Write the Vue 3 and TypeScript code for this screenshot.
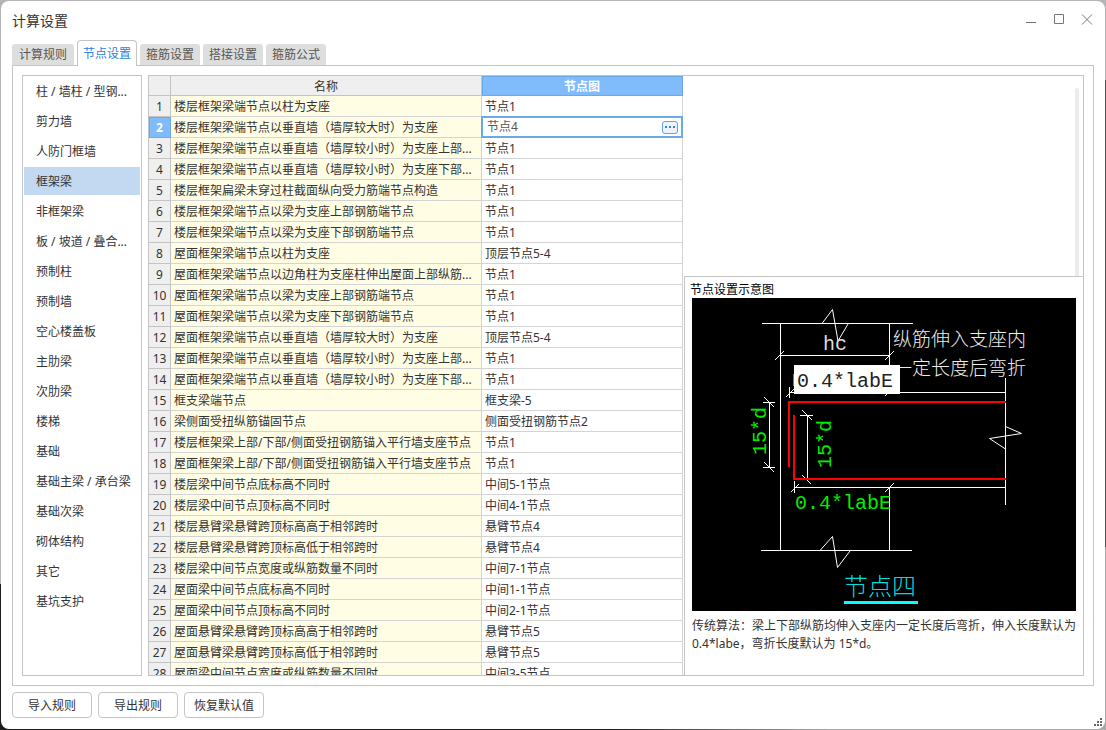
<script setup lang="ts">
import { ref } from 'vue'

interface Rule {
  name: string
  node: string
}

const tabs: string[] = ['计算规则', '节点设置', '箍筋设置', '搭接设置', '箍筋公式']
const activeTab = ref(1)

const categories: string[] = [
  '柱 / 墙柱 / 型钢...', '剪力墙', '人防门框墙', '框架梁', '非框架梁', '板 / 坡道 / 叠合...',
  '预制柱', '预制墙', '空心楼盖板', '主肋梁', '次肋梁', '楼梯', '基础', '基础主梁 / 承台梁',
  '基础次梁', '砌体结构', '其它', '基坑支护',
]
const activeCategory = ref(3)

const rules = ref<Rule[]>([
  { name: '楼层框架梁端节点以柱为支座', node: '节点1' },
  { name: '楼层框架梁端节点以垂直墙（墙厚较大时）为支座', node: '节点4' },
  { name: '楼层框架梁端节点以垂直墙（墙厚较小时）为支座上部...', node: '节点1' },
  { name: '楼层框架梁端节点以垂直墙（墙厚较小时）为支座下部...', node: '节点1' },
  { name: '楼层框架扁梁未穿过柱截面纵向受力筋端节点构造', node: '节点1' },
  { name: '楼层框架梁端节点以梁为支座上部钢筋端节点', node: '节点1' },
  { name: '楼层框架梁端节点以梁为支座下部钢筋端节点', node: '节点1' },
  { name: '屋面框架梁端节点以柱为支座', node: '顶层节点5-4' },
  { name: '屋面框架梁端节点以边角柱为支座柱伸出屋面上部纵筋...', node: '节点1' },
  { name: '屋面框架梁端节点以梁为支座上部钢筋端节点', node: '节点1' },
  { name: '屋面框架梁端节点以梁为支座下部钢筋端节点', node: '节点1' },
  { name: '屋面框架梁端节点以垂直墙（墙厚较大时）为支座', node: '顶层节点5-4' },
  { name: '屋面框架梁端节点以垂直墙（墙厚较小时）为支座上部...', node: '节点1' },
  { name: '屋面框架梁端节点以垂直墙（墙厚较小时）为支座下部...', node: '节点1' },
  { name: '框支梁端节点', node: '框支梁-5' },
  { name: '梁侧面受扭纵筋锚固节点', node: '侧面受扭钢筋节点2' },
  { name: '楼层框架梁上部/下部/侧面受扭钢筋锚入平行墙支座节点', node: '节点1' },
  { name: '屋面框架梁上部/下部/侧面受扭钢筋锚入平行墙支座节点', node: '节点1' },
  { name: '楼层梁中间节点底标高不同时', node: '中间5-1节点' },
  { name: '楼层梁中间节点顶标高不同时', node: '中间4-1节点' },
  { name: '楼层悬臂梁悬臂跨顶标高高于相邻跨时', node: '悬臂节点4' },
  { name: '楼层悬臂梁悬臂跨顶标高低于相邻跨时', node: '悬臂节点4' },
  { name: '楼层梁中间节点宽度或纵筋数量不同时', node: '中间7-1节点' },
  { name: '屋面梁中间节点底标高不同时', node: '中间1-1节点' },
  { name: '屋面梁中间节点顶标高不同时', node: '中间2-1节点' },
  { name: '屋面悬臂梁悬臂跨顶标高高于相邻跨时', node: '悬臂节点5' },
  { name: '屋面悬臂梁悬臂跨顶标高低于相邻跨时', node: '悬臂节点5' },
  { name: '屋面梁中间节点宽度或纵筋数量不同时', node: '中间3-5节点' },
])
const editing = ref(1)
</script>

<template>
  <div class="backdrop">
    <main class="dialog">
      <header class="titlebar">
        <h1>计算设置</h1>
        <div class="window-buttons">
          <button type="button" aria-label="最小化">
            <svg viewBox="0 0 12 12"><path d="M1 9.5h10" /></svg>
          </button>
          <button type="button" aria-label="最大化">
            <svg viewBox="0 0 12 12"><path d="M1.5 1.5h9v9h-9z" /></svg>
          </button>
          <button type="button" aria-label="关闭">
            <svg viewBox="0 0 12 12"><path d="M1 1.500l10 10M11 1.500L1 11.500" /></svg>
          </button>
        </div>
      </header>

      <div class="tabs" role="tablist">
        <button
          v-for="(tab, i) in tabs"
          :key="tab"
          type="button"
          role="tab"
          :aria-selected="i === activeTab"
          :class="['tab', { active: i === activeTab }]"
          @click="activeTab = i"
        >{{ tab }}</button>
      </div>

      <section class="page">
        <nav class="categories">
          <button
            v-for="(item, i) in categories"
            :key="item"
            type="button"
            :class="['category', { active: i === activeCategory }]"
            @click="activeCategory = i"
          >{{ item }}</button>
        </nav>

        <div class="content">
          <div class="grid">
            <table>
              <colgroup>
                <col class="col-index" />
                <col class="col-name" />
                <col class="col-node" />
              </colgroup>
              <thead>
                <tr>
                  <th></th>
                  <th scope="col">名称</th>
                  <th scope="col" class="selected">节点图</th>
                </tr>
              </thead>
              <tbody>
                <tr v-for="(rule, i) in rules" :key="i">
                  <th scope="row" :class="{ selected: i === editing }">{{ i + 1 }}</th>
                  <td class="name">{{ rule.name }}</td>
                  <td v-if="i === editing" class="node editing">
                    <div class="editor">
                      <input v-model="rule.node" type="text" aria-label="节点图" />
                      <button type="button" aria-label="选择节点">
                        <svg viewBox="0 0 12 2"><path d="M1 0h2v2h-2zM5 0h2v2h-2zM9 0h2v2h-2z" /></svg>
                      </button>
                    </div>
                  </td>
                  <td v-else class="node" @click="editing = i">{{ rule.node }}</td>
                </tr>
              </tbody>
            </table>
          </div>

          <div class="side">
            <div class="options"><div class="scrollbar"></div></div>
            <div class="preview">
              <h2>节点设置示意图</h2>
              <svg class="drawing" viewBox="692 298 384 313" role="img" aria-label="节点四">
                <rect x="692" y="298" width="384" height="313" fill="#000" />
                <g class="lines">
                  <path d="M762 323.5H913M780.5 323V551M889.5 323V392M889.5 488V551M761 550.5H912" />
                  <path d="M780 355.5H890M789 392.5H1006M789.5 387V398M794 487.5H1006M794.5 481V493" />
                  <path d="M769.5 402V468M763 402.5H775M763 467.5H775M807.5 415V479M800 415.5H813" />
                  <path d="M1005.5 378V505" />
                  <path d="M822 323.5L832.5 309.5L838 341L848 324M820 550.5L832.5 536.5L837.5 567.5L850 551" />
                  <path d="M1005.5 426.5L1021.5 433.5L989.5 438.5L1005.5 449" />
                  <path d="M775 360L784 351M885 360L894 351M786 397L794 389M885 396L890 391" />
                  <path d="M764 397L774 407M764 462L774 472M802 410L812 420M802 475L811 484" />
                  <path d="M791 492L799 484M885 492L894 483" />
                </g>
                <path class="bars" d="M1006 402H789V467M794 415V479H1006" />
                <text class="cad white" x="823" y="350">hc</text>
                <text class="note" x="893" y="346">纵筋伸入支座内</text>
                <text class="note" x="893" y="375">一定长度后弯折</text>
                <rect x="793" y="374" width="1" height="12" fill="#0c0" />
                <rect x="794" y="365" width="106" height="29" fill="#fff" />
                <text class="cad black" x="797" y="387">0.4*labE</text>
                <text class="cad green" x="795" y="509">0.4*labE</text>
                <text class="cad green" transform="translate(766 455) rotate(-90)">15*d</text>
                <text class="cad green" transform="translate(831 468) rotate(-90)">15*d</text>
                <text class="caption" x="844" y="595">节点四</text>
                <rect x="844" y="601" width="74" height="3" fill="#0ff" />
              </svg>
              <p>传统算法：梁上下部纵筋均伸入支座内一定长度后弯折，伸入长度默认为 0.4*labe，弯折长度默认为 15*d。</p>
            </div>
          </div>
        </div>
      </section>

      <footer class="actions">
        <button type="button">导入规则</button>
        <button type="button">导出规则</button>
        <button type="button">恢复默认值</button>
        <svg class="grip" viewBox="0 0 8 8">
          <path d="M6 0h2v2h-2zM3 3h2v2h-2zM6 3h2v2h-2zM0 6h2v2h-2zM3 6h2v2h-2zM6 6h2v2h-2z" />
        </svg>
      </footer>
    </main>
  </div>
</template>

<style>
html,
body,
#app {
  height: 100%;
  margin: 0;
}
</style>

<style scoped>
.backdrop,
.backdrop * {
  box-sizing: border-box;
}
.backdrop {
  height: 100%;
  padding: 1px;
  overflow: hidden;
  background:
    linear-gradient(to right, #1c1c1c 0 55%, #aaa 75%) bottom / 100% 8px no-repeat,
    linear-gradient(#b4b4b6 0 80%, #1c1c1c 80%) left / 1px 100% no-repeat,
    linear-gradient(#b4b4b6 0 11%, #555 11% 75%, #aaa 75%) right / 1px 100% no-repeat,
    #b4b4b6;
  font: 12px/18px "Noto Sans", "Noto Sans CJK SC", sans-serif;
  color: #333;
}
button,
input {
  font: inherit;
  color: inherit;
  margin: 0;
  padding: 0;
  border: 0;
  background: none;
}
.dialog {
  height: 100%;
  display: flex;
  flex-direction: column;
  padding: 0 11px;
  background: #fff;
  border-radius: 8px;
}
.titlebar {
  display: flex;
  justify-content: space-between;
  align-items: center;
  height: 39px;
  flex: none;
}
h1 {
  margin: 0;
  font-size: 14px;
  line-height: 20px;
  font-weight: 400;
}
.window-buttons {
  display: flex;
  gap: 16px;
  padding: 0 1px 3px 0;
}
.window-buttons button {
  width: 12px;
  height: 12px;
}
.window-buttons svg {
  display: block;
  width: 12px;
  height: 12px;
  fill: none;
  stroke: #777;
}
.tabs {
  display: flex;
  align-items: flex-end;
  gap: 3px;
  height: 25px;
  flex: none;
  position: relative;
  z-index: 1;
}
.tab {
  height: 21px;
  padding: 0 6px;
  border-radius: 3px 3px 0 0;
  background: #dedede;
  color: #555;
}
.tab:first-child {
  padding: 0 7px;
}
.tab.active {
  height: 26px;
  margin-bottom: -1px;
  padding: 0 5px;
  border: 1px solid #c4c4c4;
  border-bottom: 0;
  border-radius: 4px 4px 0 0;
  background: #fff;
  color: #2a7fe0;
}
.page {
  flex: 1;
  min-height: 0;
  display: flex;
  gap: 6px;
  padding: 9px;
  border: 1px solid #c4c4c4;
}
.categories {
  width: 120px;
  flex: none;
  display: flex;
  flex-direction: column;
  gap: 2px;
  padding: 1px;
  border: 1px solid #c4c4c4;
}
.category {
  flex: none;
  height: 28px;
  padding: 2px 6px 0 12px;
  text-align: left;
  white-space: nowrap;
}
.category.active {
  background: #c3d9f1;
}
.content {
  flex: 1;
  min-width: 0;
  display: flex;
  border: 1px solid #c4c4c4;
}
.grid {
  flex: none;
  overflow: hidden;
}
table {
  width: 534px;
  table-layout: fixed;
  border-collapse: separate;
  border-spacing: 0;
}
.col-index {
  width: 22px;
}
.col-name {
  width: 311px;
}
.col-node {
  width: 201px;
}
th,
td {
  height: 21px;
  padding: 2px 0 0 3px;
  line-height: 18px;
  border-right: 1px solid #d4d4d4;
  border-bottom: 1px solid #d4d4d4;
  white-space: nowrap;
}
th {
  padding: 2px 0 0;
  background: #efefef;
  border-color: #c4c4c4;
  font-weight: 400;
  text-align: center;
}
thead th {
  height: 20px;
  line-height: 17px;
}
th.selected {
  background: #80bbfb;
  border-color: #6aa9e6;
  color: #fff;
  font-weight: 700;
  box-shadow: inset 0 1px #6aa9e6, inset 1px 0 #6aa9e6;
}
.name {
  background: #fffde4;
}
.node.editing {
  position: relative;
}
.editor {
  position: absolute;
  inset: -1px;
  display: flex;
  align-items: center;
  padding: 0 3px 0 4px;
  border: 2px solid #6aa9e6;
  background: #fff;
}
.editor input {
  flex: 1;
  min-width: 0;
  height: 18px;
  outline: 0;
  color: #555;
}
.editor button {
  width: 16px;
  height: 13px;
  border: 1px solid #5fa3e6;
  border-radius: 3px;
  background: #eef2fa;
}
.editor svg {
  display: block;
  width: 12px;
  height: 2px;
  margin: 0 1px;
  fill: #3a82d8;
}
.side {
  flex: 1;
  min-width: 0;
  display: flex;
  flex-direction: column;
  padding-left: 1px;
}
.options {
  flex: 0 0 200px;
  display: flex;
  justify-content: flex-end;
  padding: 12px 4px 0 0;
}
.scrollbar {
  width: 4px;
  border-radius: 2px 2px 0 0;
  background: #ebebeb;
}
.preview {
  flex: 1;
  min-height: 0;
  padding: 4px 7px 0;
  border-top: 1px solid #c4c4c4;
  border-left: 1px solid #c4c4c4;
}
h2 {
  margin: 0 0 0 -2px;
  font-size: 12px;
  line-height: 17px;
  font-weight: 400;
  color: #000;
}
.drawing {
  display: block;
  width: 100%;
}
.lines {
  fill: none;
  stroke: #fff;
}
.bars {
  fill: none;
  stroke: #f00;
  stroke-width: 2;
}
.cad {
  font: 20px "Liberation Mono", monospace;
}
.white {
  fill: #ddd;
}
.green {
  fill: #0e0;
}
.black {
  fill: #222;
}
.note {
  font: 300 19px "Noto Sans CJK SC", sans-serif;
  fill: #eee;
}
.caption {
  font: 300 24px "Noto Sans CJK SC", sans-serif;
  fill: #0dd;
}
p {
  margin: 6px -4px 0 0;
  line-height: 18px;
}
.actions {
  flex: none;
  display: flex;
  gap: 6px;
  padding: 6px 0 11px;
  position: relative;
}
.actions button {
  width: 80px;
  height: 26px;
  padding-top: 2px;
  border: 1px solid #c4c4c4;
  border-radius: 4px;
  background: #fff;
}
.grip {
  position: absolute;
  right: -8px;
  bottom: 3px;
  width: 8px;
  height: 8px;
  fill: #666;
}
</style>
